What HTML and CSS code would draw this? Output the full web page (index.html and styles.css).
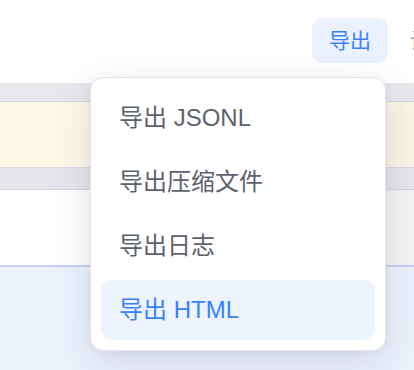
FILE: index.html
```html
<!DOCTYPE html>
<html lang="zh-CN">
<head>
<meta charset="utf-8">
<link rel="stylesheet" href="styles.css">
</head>
<body>
<div class="page">
  <header class="topbar">
    <button class="btn-export">导出</button>
    <button class="btn-more">设置</button>
  </header>
  <main class="content">
    <div class="band band-gray"></div>
    <div class="band band-yellow"></div>
    <div class="band band-gray2"></div>
    <div class="band band-white"></div>
    <div class="band band-blue"></div>
  </main>
  <div class="menu">
    <div class="menu-item">导出 JSONL</div>
    <div class="menu-item">导出压缩文件</div>
    <div class="menu-item">导出日志</div>
    <div class="menu-item active">导出 HTML</div>
  </div>
</div>
</body>
</html>
```
FILE: styles.css
```css
html, body {
  margin: 0;
  padding: 0;
}
body {
  width: 414px;
  height: 370px;
  overflow: hidden;
  font-family: "Liberation Sans", "Noto Sans CJK SC", sans-serif;
  background: #ffffff;
}
.page {
  position: relative;
  width: 414px;
  height: 370px;
  overflow: hidden;
}
.topbar {
  height: 83px;
  background: #ffffff;
  display: flex;
  align-items: flex-start;
  padding: 18px 0 0 312px;
  box-sizing: border-box;
  gap: 22px;
}
.btn-export {
  flex: none;
  width: 76px;
  height: 45px;
  border: none;
  border-radius: 11px;
  background: #eaf2ff;
  color: #3b82f6;
  font-family: "Liberation Sans", "Noto Sans CJK SC", sans-serif;
  font-size: 21px;
  padding: 0;
  line-height: 45px;
}
.btn-more {
  flex: none;
  border: none;
  background: transparent;
  color: #9ca3af;
  font-family: "Liberation Sans", "Noto Sans CJK SC", sans-serif;
  font-size: 21px;
  padding: 0;
  height: 45px;
  line-height: 45px;
}
.content {
  display: flex;
  flex-direction: column;
}
.band {
  flex: none;
}
.band-gray {
  height: 18px;
  background: #e7e8ec;
  border-bottom: 1px solid #d3d6dd;
}
.band-yellow {
  height: 65px;
  background: linear-gradient(90deg, #fdf9ea, #f8f4e6);
  border-bottom: 1px solid #d5d7dd;
}
.band-gray2 {
  height: 21px;
  background: #e5e6ea;
  border-bottom: 1px solid #d3d6dd;
}
.band-white {
  height: 75px;
  background: linear-gradient(90deg, #ffffff 20%, #f3f3f4);
  border-bottom: 2px solid #c7d2fb;
}
.band-blue {
  height: 120px;
  background: #ecf2fc;
}
.menu {
  position: absolute;
  left: 90px;
  top: 77px;
  width: 296px;
  box-sizing: border-box;
  padding: 10px;
  background: #ffffff;
  border: 1px solid #e3e5ea;
  border-radius: 13px;
  box-shadow: 0 12px 40px rgba(30, 41, 70, 0.13), 0 2px 6px rgba(30, 41, 70, 0.05);
  display: flex;
  flex-direction: column;
  gap: 4px;
}
.menu-item {
  height: 60px;
  line-height: 60px;
  padding-left: 18px;
  border-radius: 11px;
  font-size: 24px;
  color: #5d626d;
  white-space: nowrap;
}
.menu-item.active {
  background: #edf4fe;
  color: #3b82f6;
}
```
